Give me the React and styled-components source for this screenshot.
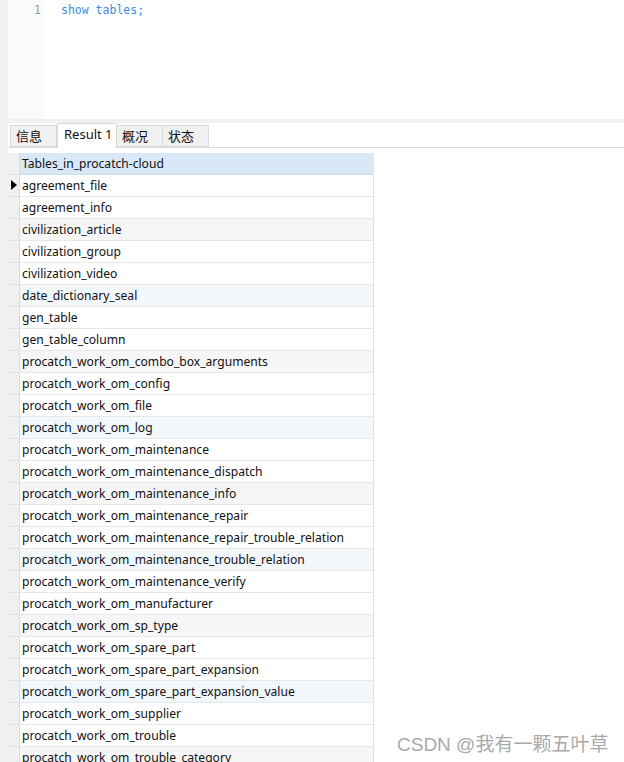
import React from "react";
import styled, { createGlobalStyle } from "styled-components";

const GlobalStyle = createGlobalStyle`
  html, body {
    margin: 0;
    padding: 0;
    background: #fff;
    overflow: hidden;
  }
  body {
    font-family: "Noto Sans", "Noto Sans CJK SC", sans-serif;
  }
`;

const tables = [
  "agreement_file",
  "agreement_info",
  "civilization_article",
  "civilization_group",
  "civilization_video",
  "date_dictionary_seal",
  "gen_table",
  "gen_table_column",
  "procatch_work_om_combo_box_arguments",
  "procatch_work_om_config",
  "procatch_work_om_file",
  "procatch_work_om_log",
  "procatch_work_om_maintenance",
  "procatch_work_om_maintenance_dispatch",
  "procatch_work_om_maintenance_info",
  "procatch_work_om_maintenance_repair",
  "procatch_work_om_maintenance_repair_trouble_relation",
  "procatch_work_om_maintenance_trouble_relation",
  "procatch_work_om_maintenance_verify",
  "procatch_work_om_manufacturer",
  "procatch_work_om_sp_type",
  "procatch_work_om_spare_part",
  "procatch_work_om_spare_part_expansion",
  "procatch_work_om_spare_part_expansion_value",
  "procatch_work_om_supplier",
  "procatch_work_om_trouble",
  "procatch_work_om_trouble_category",
];

const tabs = ["信息", "Result 1", "概况", "状态"];

const Page = styled.div`
  display: flex;
  height: 762px;
  position: relative;
  overflow: hidden;
`;

const LeftStrip = styled.div`
  width: 8px;
  flex-shrink: 0;
  background: #f0f0f0;
`;

const Main = styled.div`
  flex: 1;
  display: flex;
  flex-direction: column;
`;

const Editor = styled.div`
  height: 119px;
  display: flex;
  flex-shrink: 0;
`;

const Gutter = styled.div`
  width: 36px;
  background: #fafafa;
  text-align: right;
  box-sizing: border-box;
  padding: 2px 3px 0 0;
  font-family: "DejaVu Sans Mono", monospace;
  font-size: 11.5px;
  line-height: 16px;
  color: #9a9a8a;
`;

const Code = styled.div`
  flex: 1;
  padding: 2px 0 0 17px;
  font-family: "DejaVu Sans Mono", monospace;
  font-size: 11.5px;
  line-height: 16px;
  color: #3a8de0;
`;

const Divider = styled.div`
  height: 4px;
  background: #f0f0f0;
  flex-shrink: 0;
`;

const TabBar = styled.div`
  display: flex;
  align-items: flex-end;
  height: 24px;
  padding-left: 2px;
  border-bottom: 1px solid #dadada;
  flex-shrink: 0;
`;

const Tab = styled.div`
  box-sizing: border-box;
  width: ${(p) => p.w}px;
  height: ${(p) => (p.active ? 25 : 22)}px;
  margin-bottom: ${(p) => (p.active ? -1 : 0)}px;
  background: ${(p) => (p.active ? "#fff" : "#f0f0f0")};
  border: 1px solid #d9d9d9;
  border-bottom: ${(p) => (p.active ? "none" : "1px solid #d9d9d9")};
  border-left: ${(p) => (p.first || p.active ? "1px solid #d9d9d9" : "none")};
  font-family: "Noto Sans", "Noto Sans CJK SC", sans-serif;
  font-size: 13px;
  color: #111;
  padding-left: ${(p) => (p.active ? 6 : 5)}px;
  line-height: ${(p) => (p.active ? 21 : 20)}px;
  white-space: nowrap;
`;

const Grid = styled.div`
  margin-top: 5px;
  display: flex;
  flex-direction: column;
`;

const Row = styled.div`
  display: flex;
  height: 22px;
`;

const Indicator = styled.div`
  width: 12px;
  flex-shrink: 0;
  background: #f0f0f0;
  border-right: 1px solid #dcdcdc;
  border-bottom: 1px solid #e4e4e4;
  box-sizing: border-box;
  position: relative;
`;

const Arrow = styled.span`
  position: absolute;
  left: 3px;
  top: 5px;
  width: 0;
  height: 0;
  border-top: 5px solid transparent;
  border-bottom: 5px solid transparent;
  border-left: 6px solid #000;
`;

const Cell = styled.div`
  width: 354px;
  box-sizing: border-box;
  border-right: 1px solid #e2e2e2;
  border-bottom: 1px solid ${(p) => (p.head ? "#cfdcea" : "#e8e8e8")};
  background: ${(p) => p.bg};
  padding-left: 2px;
  font-size: 12.1px;
  line-height: 21px;
  color: #111;
  white-space: nowrap;
  overflow: hidden;
`;

const Watermark = styled.div`
  position: absolute;
  left: 397px;
  top: 729px;
  font-family: "Liberation Sans", "Noto Sans CJK SC", sans-serif;
  font-size: 19px;
  color: #a9a9a9;
  white-space: nowrap;
`;

const rowBg = (i) => {
  const n = i + 1;
  if (n % 3 !== 0) return "#fff";
  return (n / 3) % 2 === 1 ? "#f6f6f6" : "#f2f7fc";
};

const tabWidths = [47, 60, 46, 46];

const App = () => {
  return (
    <>
      <GlobalStyle />
      <Page>
        <LeftStrip />
        <Main>
          <Editor>
            <Gutter>1</Gutter>
            <Code>show tables;</Code>
          </Editor>
          <Divider />
          <TabBar>
            {tabs.map((t, i) => (
              <Tab key={t} w={tabWidths[i]} active={i === 1} first={i === 0}>
                {t}
              </Tab>
            ))}
          </TabBar>
          <Grid>
            <Row>
              <Indicator />
              <Cell head bg="#d9e8f7">
                Tables_in_procatch-cloud
              </Cell>
            </Row>
            {tables.map((name, i) => (
              <Row key={name}>
                <Indicator>{i === 0 && <Arrow />}</Indicator>
                <Cell bg={rowBg(i)}>{name}</Cell>
              </Row>
            ))}
          </Grid>
        </Main>
        <Watermark>CSDN @我有一颗五叶草</Watermark>
      </Page>
    </>
  );
};

export default App;
